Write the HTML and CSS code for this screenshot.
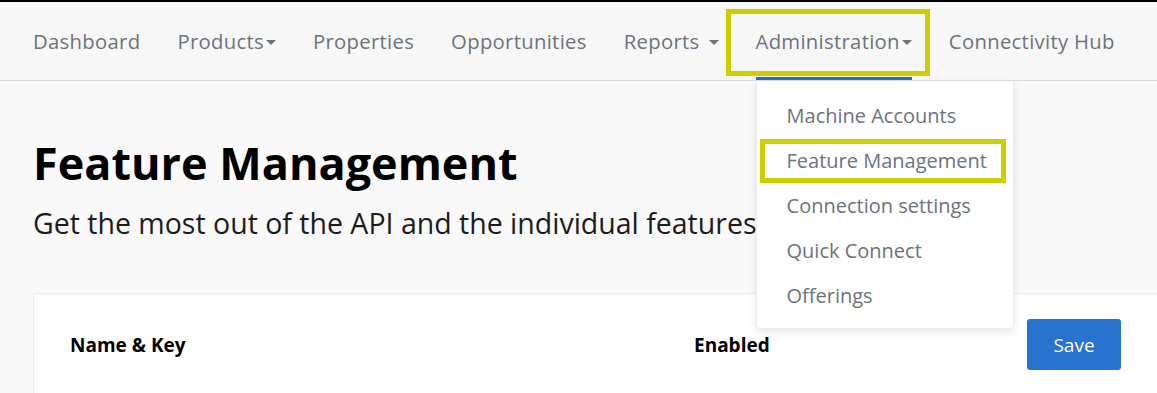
FILE: index.html
```html
<!DOCTYPE html>
<html lang="en">
<head>
    <meta charset="UTF-8">
    <meta name="viewport" content="width=device-width, initial-scale=1.0">
    <title>Feature Management</title>
    <link rel="stylesheet" href="styles.css">
</head>
<body>
    <header class="navbar">
        <nav class="nav">
            <a class="nav-link" href="#">Dashboard</a>
            <a class="nav-link" href="#">Products<span class="caret"></span></a>
            <a class="nav-link" href="#">Properties</a>
            <a class="nav-link" href="#">Opportunities</a>
            <a class="nav-link" href="#">Reports<span class="caret spaced"></span></a>
            <div class="dropdown">
                <a class="nav-link active marked" href="#">Administration<span class="caret"></span></a>
                <ul class="dropdown-menu">
                    <li><a href="#">Machine Accounts</a></li>
                    <li class="marked"><a href="#">Feature Management</a></li>
                    <li><a href="#">Connection settings</a></li>
                    <li><a href="#">Quick Connect</a></li>
                    <li><a href="#">Offerings</a></li>
                </ul>
            </div>
            <a class="nav-link" href="#">Connectivity Hub</a>
        </nav>
    </header>

    <main class="page">
        <h1 class="title">Feature Management</h1>
        <p class="lead">Get the most out of the API and the individual features you can enable.</p>

        <section class="card">
            <div class="card-head">
                <span class="col-name">Name &amp; Key</span>
                <span class="col-enabled">Enabled</span>
                <button class="btn-save" type="button">Save</button>
            </div>
        </section>
    </main>
</body>
</html>
```

FILE: styles.css
```css
body {
    margin: 0;
    background: #f9f9f9;
    border-top: 2px solid #000;
    font-family: "Open Sans", "Noto Sans", sans-serif;
    color: #111;
    overflow: hidden;
}
a {
    text-decoration: none;
    color: inherit;
}

/* top navigation */
.navbar {
    height: 78px;
    background: #f7f7f7;
    border-bottom: 1px solid #dcdcdc;
}
.nav {
    display: flex;
    height: 100%;
    gap: 37px;
    padding-left: 33px;
}
.nav-link {
    position: relative;
    display: flex;
    align-items: center;
    height: 100%;
    box-sizing: border-box;
    padding-top: 3px;
    border-bottom: 3px solid transparent;
    font-size: 20.3px;
    letter-spacing: 0.3px;
    color: #6c737c;
    white-space: pre;
}
.nav-link.active {
    border-bottom-color: #1f6fcf;
}
.caret {
    display: inline-block;
    width: 0;
    height: 0;
    margin-left: 2px;
    margin-top: 2px;
    border-left: 5.5px solid transparent;
    border-right: 5.5px solid transparent;
    border-top: 5px solid #6c737c;
}
.caret.spaced {
    margin-left: 9px;
}

/* annotation boxes drawn over the screenshot */
.marked {
    position: relative;
}
.nav-link.marked::after {
    content: "";
    position: absolute;
    left: -30px;
    right: -18px;
    top: 7px;
    bottom: 1px;
    border: 5px solid #cdcd00;
}
.dropdown-menu li.marked::after {
    content: "";
    position: absolute;
    left: 3px;
    right: 7px;
    top: 1px;
    bottom: 0;
    border: 5px solid #cdcd00;
}

/* dropdown */
.dropdown {
    position: relative;
    height: 100%;
}
.dropdown-menu {
    position: absolute;
    top: 100%;
    left: 0;
    margin: 1px 0 0;
    width: 258px;
    box-sizing: border-box;
    padding: 12px 0 10px;
    list-style: none;
    background: #fff;
    border: 1px solid #ececec;
    border-top: none;
    border-radius: 0 0 5px 5px;
    box-shadow: 0 3px 8px rgba(0, 0, 0, 0.1);
    z-index: 10;
}
.dropdown-menu li {
    height: 45px;
    display: flex;
    align-items: center;
}
.dropdown-menu a {
    padding-left: 30px;
    font-size: 20px;
    color: #6c737c;
}

/* page */
.page {
    padding: 52px 0 0 33px;
}
.title {
    margin: 0;
    font-size: 45px;
    font-weight: 700;
    line-height: 60px;
    color: #000;
}
.lead {
    margin: 11px 0 0;
    font-size: 28.5px;
    line-height: 38px;
    color: #1c1c1c;
}
.card {
    margin-top: 51px;
    background: #fff;
    border: 1px solid #ececec;
    border-right: none;
    height: 200px;
}
.card-head {
    display: grid;
    grid-template-columns: 624px 333px auto;
    align-items: center;
    padding: 25px 0 0 36px;
}
.col-name,
.col-enabled {
    font-size: 19px;
    font-weight: 700;
    color: #000;
}
.btn-save {
    width: 94px;
    height: 51px;
    border: none;
    border-radius: 3px;
    background: #2873cf;
    color: #fff;
    font-family: inherit;
    font-size: 19px;
}
```
